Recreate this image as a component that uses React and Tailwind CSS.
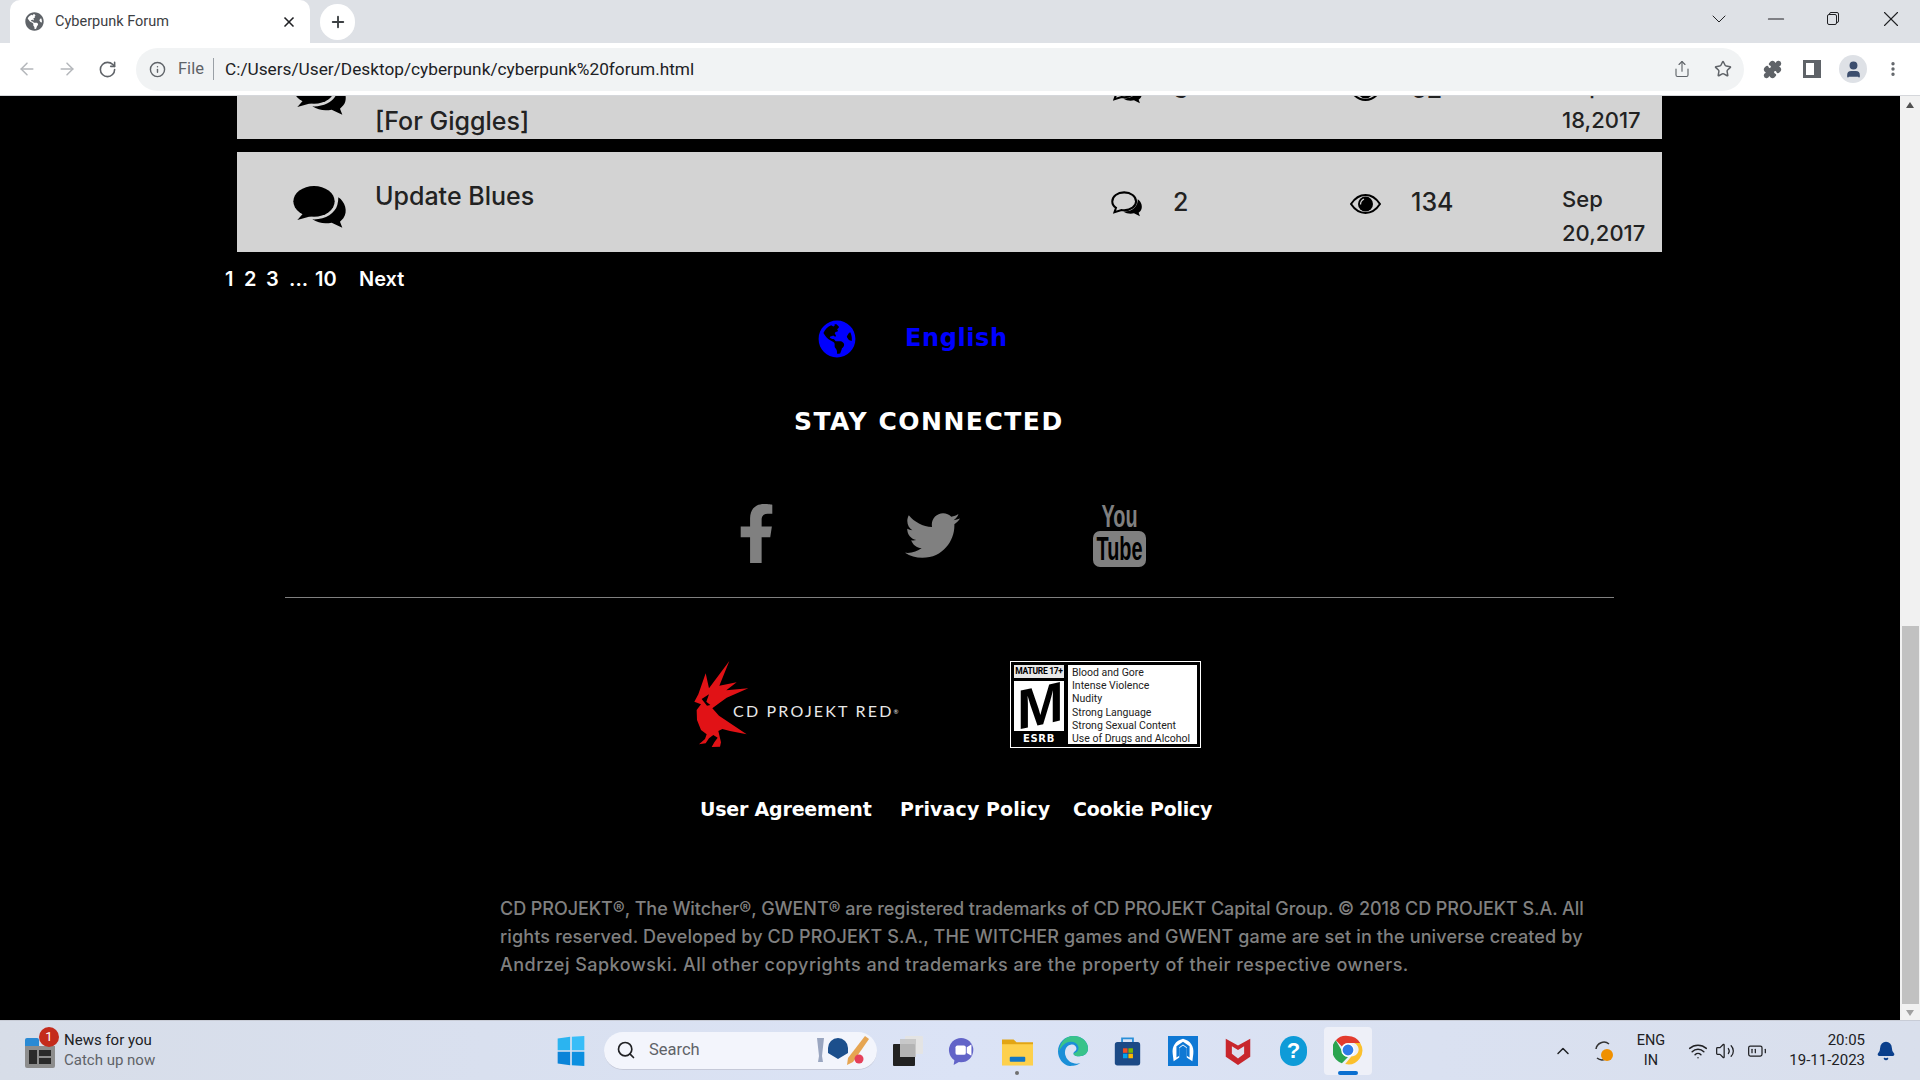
import React from "react";
import { ArrowLeft, ArrowRight, RotateCw, Info, Star, Puzzle, MoreVertical, User, Plus, X, ChevronDown, Minus, ChevronUp, Search, Wifi, Volume2, BatteryMedium, Bell, Share } from "lucide-react";
import { FaGlobeAmericas, FaFacebookF, FaTwitter } from "react-icons/fa";

const grotesk = "font-['Inter','Liberation_Sans',sans-serif]";
const wide = "font-['DejaVu_Sans','Liberation_Sans',sans-serif]";
const ui = "font-['Roboto','Open_Sans',sans-serif]";

const backBubble = "M175 82C195 95 205 125 190 145L180 155L187 173L155 158C135 162 115 160 97 148C135 150 165 130 172 105C174 97 175 90 175 82z";

function ChatBig({ className }) {
  return (
    <svg viewBox="0 0 240 210" className={className}>
      <ellipse cx="102" cy="94" rx="62" ry="46" fill="#000" />
      <path d="M70 130L52 150L95 138z" fill="#000" />
      <path d={backBubble} fill="#000" />
    </svg>
  );
}

function ChatOutline({ className }) {
  return (
    <svg viewBox="0 0 240 210" className={className}>
      <path d={backBubble} fill="#000" />
      <path d="M102 45C66 45 38 66 38 94C38 108 46 120 58 128L50 152L88 140C93 141 97 141 102 141C138 141 166 120 166 94C166 66 138 45 102 45z" fill="#d3d3d3" stroke="#000" strokeWidth="11" />
    </svg>
  );
}

function Eye({ className }) {
  return (
    <svg viewBox="0 0 31 20" className={className}>
      <path d="M1 10C5 4 10 1 15.500 1S26 4 30 10C26 16 21 19 15.500 19S5 16 1 10z" fill="none" stroke="#000" strokeWidth="2" />
      <circle cx="15.500" cy="10" r="7.500" fill="#000" />
      <path d="M14 5C12 6 10.500 8 10.500 10.500" stroke="#d3d3d3" strokeWidth="1.300" fill="none" />
    </svg>
  );
}

function TopicRow({ title, replies, views, date1, date2 }) {
  return (
    <div className={`flex h-[100px] w-[1425px] bg-[#d3d3d3] text-[#222] shrink-0 ${grotesk}`}>
      <div className="w-[138px] pl-[43px] pt-[18px] shrink-0"><ChatBig className="w-[80px] h-[70px]" /></div>
      <div className="w-[737px] pt-[26px] shrink-0 text-[25px] leading-[36px] font-medium">{title}</div>
      <div className="w-[237px] flex items-start pt-[32px] -ml-[7px] gap-[23px] shrink-0">
        <ChatOutline className="w-[45px] h-[39px]" />
        <span className="text-[25px] leading-[30px] font-medium mt-[3px]">{replies}</span>
      </div>
      <div className="w-[220px] flex items-start pl-[8px] gap-[30px] shrink-0">
        <Eye className="w-[31px] h-[20px] mt-[42px]" />
        <span className="text-[25px] leading-[30px] font-medium mt-[35px]">{views}</span>
      </div>
      <div className="pt-[30px] text-[22px] leading-[34px] font-medium">{date1}<br />{date2}</div>
    </div>
  );
}

function Bird() {
  return (
    <svg viewBox="0 0 300 300" className="w-[100px] h-[100px] shrink-0 -mt-[6px]">
      <path fill="#e11216" d="M28 140L40 118L62 55L72 100L133 18L103 92L155 82L124 106L190 100L125 128L98 148L82 160L102 182L185 238L135 228L112 222L100 228L108 262L105 275L80 276L88 262L98 248L85 240L72 250L62 265L42 268L60 252L65 238L48 225L36 195L35 165L48 148z" />
      <path fill="#000" d="M50 132L72 118L64 140L76 150L66 152z" />
    </svg>
  );
}

function Esrb() {
  return (
    <div className="w-[191px] h-[87px] bg-white p-[1px] shrink-0">
      <div className="w-full h-full bg-black flex p-[3px] gap-[4px] font-['Roboto',sans-serif]">
        <div className="w-[50px] flex flex-col gap-[3px] shrink-0">
          <div className="h-[13px] bg-[#e8e8e8] text-black text-[8.500px] font-bold leading-[13px] text-center whitespace-nowrap tracking-[-0.3px]">MATURE 17+</div>
          <div className="h-[53px] bg-white flex items-center justify-center overflow-hidden">
            <span className="text-black text-[56px] leading-[56px] font-bold font-['Liberation_Sans',sans-serif] -skew-y-12 tracking-[-2px]">M</span>
          </div>
          <div className="h-[10px] text-white text-[10px] font-bold leading-[10px] text-center tracking-[0.6px] font-['DejaVu_Sans',sans-serif]">ESRB</div>
        </div>
        <div className="flex-1 bg-white text-[#222] text-[10.500px] leading-[13.200px] pl-[4px] pt-[1px] whitespace-nowrap">
          <div>Blood and Gore</div>
          <div>Intense Violence</div>
          <div>Nudity</div>
          <div>Strong Language</div>
          <div>Strong Sexual Content</div>
          <div>Use of Drugs and Alcohol</div>
        </div>
      </div>
    </div>
  );
}

function YouTube() {
  return (
    <svg viewBox="0 0 53 64" className="w-[53px] h-[64px]" fill="#808080">
      <text x="26.500" y="24" textAnchor="middle" fontFamily="'Liberation Sans Narrow','Liberation Sans',sans-serif" fontWeight="700" fontSize="32" textLength="36" lengthAdjust="spacingAndGlyphs">You</text>
      <rect x="0" y="28" width="53" height="36" rx="7" />
      <text x="26.500" y="57" textAnchor="middle" fill="#000" fontFamily="'Liberation Sans Narrow','Liberation Sans',sans-serif" fontWeight="700" fontSize="33" textLength="46" lengthAdjust="spacingAndGlyphs">Tube</text>
    </svg>
  );
}

function TabStrip() {
  return (
    <div className={`h-[43px] bg-[#dee1e6] flex items-center pl-[10px] ${ui}`}>
      <div className="w-[300px] h-[43px] bg-white rounded-t-[10px] flex items-center pl-[15px] pr-[13px] mr-[10px]">
        <FaGlobeAmericas className="w-[19px] h-[19px] text-[#5f6368]" />
        <span className="ml-[11px] text-[14.500px] text-[#3c4043] flex-1 whitespace-nowrap">Cyberpunk Forum</span>
        <X className="w-[16px] h-[16px] text-[#202124]" strokeWidth={2.500} />
      </div>
      <div className="w-[35px] h-[36px] rounded-full bg-white flex items-center justify-center">
        <Plus className="w-[18px] h-[18px] text-[#3c4043]" strokeWidth={2.500} />
      </div>
      <div className="ml-auto flex items-center h-[43px] pb-[6px] pr-[16px] text-[#202124]">
        <ChevronDown className="w-[24px] h-[24px]" strokeWidth={1} />
        <Minus className="w-[26px] h-[26px] ml-[32px]" strokeWidth={1} />
        <div className="ml-[38px] w-[12px] h-[13px] relative">
          <div className="absolute left-[2px] top-0 w-[10px] h-[11px] border border-[#202124] rounded-[2px]" />
          <div className="absolute left-0 top-[2px] w-[10px] h-[11px] border border-[#202124] rounded-[2px] bg-[#dee1e6]" />
        </div>
        <X className="w-[26px] h-[26px] ml-[39px]" strokeWidth={1} />
      </div>
    </div>
  );
}

function Toolbar() {
  return (
    <div className={`h-[53px] bg-white flex items-center border-b border-[#d5d7db] ${ui}`}>
      <ArrowLeft className="w-[20px] h-[20px] text-[#b4b7bb] ml-[17px]" strokeWidth={1.800} />
      <ArrowRight className="w-[20px] h-[20px] text-[#b4b7bb] ml-[20px]" strokeWidth={1.800} />
      <RotateCw className="w-[19px] h-[19px] text-[#5f6368] ml-[21px]" strokeWidth={2} />
      <div className="ml-[19px] w-[1608px] h-[43px] rounded-full bg-[#f1f3f4] flex items-center pl-[13px] shrink-0">
        <Info className="w-[17px] h-[17px] text-[#5f6368]" strokeWidth={2} />
        <span className="ml-[12px] w-[26px] text-[16.500px] text-[#5f6368] mt-[1px]">File</span>
        <span className="ml-[9px] w-px h-[22px] bg-[#9aa0a6]" />
        <span className="ml-[11px] text-[17.250px] text-[#202124] whitespace-nowrap mt-[2px]">C:/Users/User/Desktop/cyberpunk/cyberpunk%20forum.html</span>
        <Share className="w-[18px] h-[18px] text-[#5f6368] ml-auto" strokeWidth={1.500} />
        <Star className="w-[18px] h-[18px] text-[#5f6368] ml-[23px] mr-[12px]" strokeWidth={2} />
      </div>
      <Puzzle className="w-[19px] h-[19px] text-[#5f6368] fill-[#5f6368] ml-[19px]" />
      <div className="ml-[21px] w-[18px] h-[18px] border-[3px] border-[#5f6368] border-r-[7px]" />
      <div className="ml-[18px] w-[28px] h-[28px] rounded-full bg-[#dee1e6] flex items-center justify-center overflow-hidden">
        <User className="w-[19px] h-[19px] text-[#3c4e6e] fill-[#3c4e6e]" />
      </div>
      <MoreVertical className="w-[18px] h-[18px] text-[#5f6368] ml-[17px]" strokeWidth={2.500} />
    </div>
  );
}

function Scrollbar() {
  return (
    <div className="w-[20px] bg-[#f1f1f1] flex flex-col items-center shrink-0">
      <div className="mt-[6px] w-0 h-0 border-l-[4px] border-r-[4px] border-b-[6px] border-l-transparent border-r-transparent border-b-[#505050]" />
      <div className="mt-[518px] w-[17px] h-[378px] bg-[#c1c1c1]" />
      <div className="mt-[6px] w-0 h-0 border-l-[4px] border-r-[4px] border-t-[6px] border-l-transparent border-r-transparent border-t-[#a0a0a0]" />
    </div>
  );
}

function Page() {
  return (
    <div className="flex-1 bg-black flex flex-col overflow-hidden">
      <div className="pl-[237px] flex flex-col gap-[13px]">
        <div className="-mt-[57px]">
          <TopicRow title={<span className="block"><span className="invisible">.</span><br /><span className="relative top-[2px]">[For Giggles]</span></span>} replies="3" views="62" date1="Sep" date2="18,2017" />
        </div>
        <TopicRow title="Update Blues" replies="2" views="134" date1="Sep" date2="20,2017" />
      </div>
      <div className={`pl-[225px] mt-[14px] flex text-white text-[20px] leading-[26px] font-semibold ${grotesk}`}>
        <span className="w-[19px]">1</span>
        <span className="w-[22px]">2</span>
        <span className="w-[23px]">3</span>
        <span className="w-[26px]">...</span>
        <span className="w-[44px]">10</span>
        <span>Next</span>
      </div>
      <div className={`flex items-center pl-[818px] mt-[28px] text-[#0000ff] ${wide}`}>
        <FaGlobeAmericas className="w-[38px] h-[38px]" />
        <span className="ml-[49px] text-[24px] leading-[38px] font-bold tracking-[0.6px] -mt-[2px]">English</span>
      </div>
      <div className={`pl-[794px] mt-[46px] text-white text-[25px] leading-[36px] font-bold whitespace-nowrap tracking-[1.500px] ${wide}`}>STAY CONNECTED</div>
      <div className="flex items-start pl-[738px] mt-[63px] text-[#808080] h-[64px]">
        <FaFacebookF className="w-[37px] h-[59px] mt-[1px]" />
        <FaTwitter className="w-[55px] h-[55px] ml-[130px] mt-[5px]" />
        <div className="ml-[133px]"><YouTube /></div>
      </div>
      <div className="ml-[285px] mt-[30px] w-[1329px] h-px bg-[#808080] shrink-0" />
      <div className="flex items-start pl-[685px] mt-[63px] h-[88px]">
        <Bird />
        <span className="-ml-[52px] mt-[41px] text-[#e8e8e8] text-[16px] leading-[18px] tracking-[2.200px] whitespace-nowrap font-['Lato',sans-serif] w-[277px] shrink-0">CD PROJEKT RED<sup className="text-[6px]">®</sup></span>
        <Esrb />
      </div>
      <div className={`flex pl-[700px] mt-[47px] text-white text-[19px] leading-[26px] font-bold whitespace-nowrap ${wide}`}>
        <span className="w-[200px] tracking-[-0.2px]">User Agreement</span>
        <span className="w-[173px] tracking-[0.1px]">Privacy Policy</span>
        <span className="tracking-[-0.25px]">Cookie Policy</span>
      </div>
      <div className={`pl-[500px] mt-[73px] w-[1590px] text-[#808080] text-[18px] leading-[28px] font-medium ${grotesk}`}>
        <div className="whitespace-nowrap tracking-[-0.06px]">CD PROJEKT®, The Witcher®, GWENT® are registered trademarks of CD PROJEKT Capital Group. © 2018 CD PROJEKT S.A. All</div>
        <div className="whitespace-nowrap tracking-[0.14px]">rights reserved. Developed by CD PROJEKT S.A., THE WITCHER games and GWENT game are set in the universe created by</div>
        <div className="whitespace-nowrap tracking-[0.48px]">Andrzej Sapkowski. All other copyrights and trademarks are the property of their respective owners.</div>
      </div>
    </div>
  );
}

function TaskIcons() {
  return (
    <>
      <div className="w-[30px] h-[30px] relative">
        <div className="absolute left-[12px] top-0 w-[18px] h-[18px] bg-[#e4e4e4] rounded-[1px]" />
        <div className="absolute left-0 top-[8px] w-[22px] h-[22px] bg-[#222] rounded-[1px]" />
        <div className="absolute left-[7px] top-[3px] w-[16px] h-[18px] bg-[#c4c4c4] opacity-90" />
      </div>
      <svg viewBox="0 0 32 32" className="w-[30px] h-[30px] ml-[25px]"><circle cx="14" cy="15" r="13" fill="#6264c8" /><rect x="8" y="10" width="11" height="10" rx="2" fill="#fff" /><path d="M20 12l5-3v12l-5-3z" fill="#fff" /><path d="M7 25l-1 6 7-4z" fill="#6264c8" /></svg>
      <div className="ml-[24px] relative w-[31px] h-[30px]">
        <svg viewBox="0 0 32 30" className="w-[31px] h-[30px]"><path d="M0 3h12l3 3h17v4H0z" fill="#e2a514" /><path d="M0 8h32v22H0z" fill="#fdd04c" /><rect x="8" y="21" width="16" height="5" rx="1" fill="#1276c4" /></svg>
        <div className="absolute left-[13px] -bottom-[9px] w-[4px] h-[4px] rounded-full bg-[#707070]" />
      </div>
      <svg viewBox="0 0 32 32" className="w-[31px] h-[31px] ml-[25px]"><path d="M16 1c9 0 15 6 15 13 0 5-4 8-9 8-3 0-6-1-6-3 0-2 3-2 3-5 0-3-3-5-6-4C8 11 6 17 8 22c2 6 9 9 15 7-4 3-8 3-11 3C5 31 0 24 0 17 0 8 7 1 16 1z" fill="#1a8fd8" /><path d="M16 1c9 0 15 6 15 13 0 5-4 8-9 8-3 0-6-1-6-3 3-1 6-3 5-7-1-3-4-5-8-5-5 0-9 4-12 10C2 8 7 1 16 1z" fill="#39c38a" /></svg>
      <svg viewBox="0 0 32 32" className="w-[29px] h-[30px] ml-[24px]"><path d="M10 6V2h12v4" fill="none" stroke="#2a8fd8" strokeWidth="2" /><rect x="2" y="6" width="28" height="26" rx="3" fill="#1c4a86" /><rect x="11" y="13" width="5" height="5" fill="#f25022" /><rect x="17" y="13" width="5" height="5" fill="#7fba00" /><rect x="11" y="19" width="5" height="5" fill="#00a4ef" /><rect x="17" y="19" width="5" height="5" fill="#ffb900" /></svg>
      <svg viewBox="0 0 32 32" className="w-[30px] h-[30px] ml-[26px]"><rect width="32" height="32" fill="#0f78d4" /><path d="M16 3c8 2 12 8 11 16l-1 8-6-4V13l-4-3-4 3v10l-6 4-1-8C4 11 8 5 16 3z" fill="#fff" /><path d="M16 6l-7 5v12l3-2V12l4-3 4 3v9l3 2V11z" fill="#0f78d4" /></svg>
      <svg viewBox="0 0 32 32" className="w-[28px] h-[30px] ml-[26px]" preserveAspectRatio="none"><path d="M2 3l14 7 14-7v19l-14 9-14-9z" fill="#c8262c" /><path d="M9 11l7 4 7-4v8l-7 5-7-5z" fill="#dedfee" /></svg>
      <div className="w-[27px] h-[30px] ml-[28px] rounded-full bg-[#0e9bd8] flex items-center justify-center text-white text-[22px] font-bold font-['Liberation_Sans',sans-serif]">?</div>
      <div className="ml-[17px] w-[48px] h-[48px] bg-[#eef0f8] rounded-[4px] relative flex items-center justify-center">
        <svg viewBox="0 0 32 32" className="w-[30px] h-[30px] -mt-[1px]">
          <path d="M16 1a15 15 0 0 1 13 7.500H16a7.500 7.500 0 0 0-6.500 3.800L3 5.500A15 15 0 0 1 16 1z" fill="#e33b2e" />
          <path d="M3 5.500l6.500 11.200a7.500 7.500 0 0 0 6.500 6.800L9.500 30A15 15 0 0 1 3 5.500z" fill="#2aa44f" />
          <path d="M29 8.500A15 15 0 0 1 13 31l6.500-8a7.500 7.500 0 0 0 3-14.500z" fill="#fbc02d" />
          <circle cx="16" cy="16" r="6.500" fill="#2e7be8" stroke="#fff" strokeWidth="1.500" />
        </svg>
        <div className="absolute bottom-0 left-[14px] w-[20px] h-[4px] rounded-full bg-[#0a6fd0]" />
      </div>
    </>
  );
}

function Taskbar() {
  return (
    <div className={`h-[60px] bg-gradient-to-r from-[#d7dde8] via-[#dbe3f6] to-[#d9dfec] border-t border-[#c8ccd6] flex items-center shrink-0 ${ui}`}>
      <div className="w-[557px] pl-[25px] flex items-center shrink-0">
        <div className="relative w-[30px] h-[32px] mt-[3px]">
          <div className="absolute top-[2px] left-0 w-[14px] h-[8px] bg-[#2a8ad4] rounded-t-[2px]" />
          <div className="absolute bottom-0 left-0 w-[30px] h-[22px] bg-[#8d8d8d] rounded-b-[2px] flex p-[4px] gap-[2px]">
            <div className="w-[8px] bg-[#2a2a2a]" /><div className="flex-1 flex flex-col gap-[2px]"><div className="flex-1 bg-[#2a2a2a]" /><div className="flex-1 bg-[#2a2a2a]" /></div>
          </div>
          <div className="absolute -top-[9px] left-[14px] w-[20px] h-[20px] rounded-full bg-[#c42b1c] text-white text-[13px] leading-[20px] text-center">1</div>
        </div>
        <div className="ml-[9px] text-[15px] leading-[20px] whitespace-nowrap -mt-[1px]">
          <div className="text-[#202124]">News for you</div>
          <div className="text-[#5f6368]">Catch up now</div>
        </div>
      </div>
      <svg viewBox="0 0 32 36" className="w-[30px] h-[30px] shrink-0 -ml-[1px]"><path d="M0 3l15-2v16H0z" fill="#2bb4f0" /><path d="M17 1l15-1v17H17z" fill="#38bdf8" /><path d="M0 19h15v16L0 33z" fill="#0b84d8" /><path d="M17 19h15v17l-15-1z" fill="#0c90e0" /></svg>
      <div className="ml-[18px] w-[273px] h-[38px] rounded-full bg-[#f3f5fc] border-b border-[#c5c9d8] flex items-center pl-[12px] shrink-0">
        <Search className="w-[20px] h-[20px] text-[#202124]" strokeWidth={2} />
        <span className="ml-[13px] text-[16.500px] text-[#5f6368]">Search</span>
        <svg viewBox="0 0 56 32" className="w-[56px] h-[32px] ml-auto mr-[6px]"><path d="M2 4h7l-2 18 1 6H3l1-6z" fill="#9aa6c0" /><path d="M13 14a10 10 0 0 1 20 0v5l-10 6-10-6z" fill="#1c4f8c" /><path d="M50 2l4 3-16 23-6 3 1-7z" fill="#e6a552" /><circle cx="44" cy="25" r="4.500" fill="#e5405a" /></svg>
      </div>
      <div className="ml-[16px] flex items-center"><TaskIcons /></div>
      <div className="ml-auto flex items-center text-[#202124] pr-[24px]">
        <ChevronUp className="w-[20px] h-[20px]" strokeWidth={1.800} />
        <svg viewBox="0 0 24 24" className="w-[24px] h-[24px] ml-[18px]"><path d="M5 10a8 8 0 0 1 13-5M19 14a8 8 0 0 1-13 5" fill="none" stroke="#333" strokeWidth="1.500" /><circle cx="16" cy="16" r="6" fill="#f09000" /></svg>
        <div className="ml-[21px] w-[30px] text-[14.500px] leading-[20px] text-center">ENG<br />IN</div>
        <Wifi className="w-[20px] h-[20px] ml-[22px]" strokeWidth={1.800} />
        <Volume2 className="w-[20px] h-[20px] ml-[7px]" strokeWidth={1.500} />
        <BatteryMedium className="w-[20px] h-[20px] ml-[12px]" strokeWidth={1.500} />
        <div className="ml-[21px] w-[77px] text-[15px] leading-[20px] text-right whitespace-nowrap -mt-[1px]">20:05<br />19-11-2023</div>
        <Bell className="w-[20px] h-[20px] ml-[11px] text-[#0a3f8c] fill-[#0a3f8c]" />
      </div>
    </div>
  );
}

export default function App() {
  return (
    <div className="w-[1920px] h-[1080px] flex flex-col overflow-hidden bg-black">
      <TabStrip />
      <Toolbar />
      <div className="flex h-[924px] shrink-0">
        <Page />
        <Scrollbar />
      </div>
      <Taskbar />
    </div>
  );
}
